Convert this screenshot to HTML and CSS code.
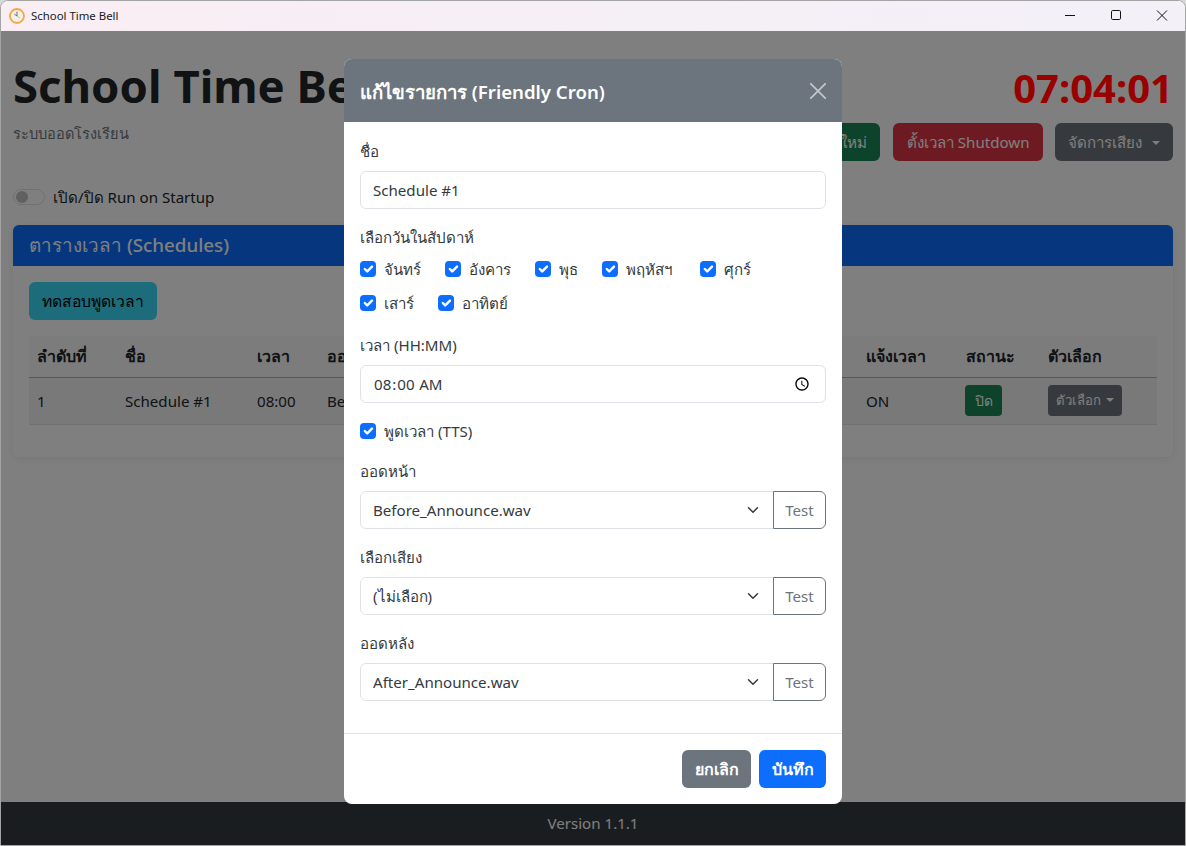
FILE: index.html
```html
<!DOCTYPE html>
<html lang="th">
<head>
<meta charset="utf-8">
<title>School Time Bell</title>
<link rel="stylesheet" href="styles.css">
</head>
<body>
<div class="window">
  <div class="titlebar">
    <svg class="app-icon" viewBox="0 0 16 16" width="16" height="16"><circle cx="8" cy="8" r="7" fill="#f6f1e8" stroke="#efa94a" stroke-width="1.8"/><path d="M8 3.6V8L5.4 6.2" fill="none" stroke="#6f6a70" stroke-width="1"/><path d="M8 8l3 2" stroke="#c9b9a8" stroke-width="1"/></svg>
    <span class="app-name">School Time Bell</span>
    <div class="win-controls">
      <svg viewBox="0 0 46 30" width="46" height="30"><path d="M18 14.5h10" stroke="#111"/></svg>
      <svg viewBox="0 0 46 30" width="46" height="30"><rect x="18.5" y="9.5" width="9" height="9" rx="1.2" fill="none" stroke="#111"/></svg>
      <svg viewBox="0 0 46 30" width="46" height="30"><path d="M18 9.5l10 10M28 9.5l-10 10" stroke="#111"/></svg>
    </div>
  </div>
  <div class="app">
    <main class="container">
      <header class="top">
        <div class="brand">
          <h1 class="brand-title">School Time Bell</h1>
          <p class="brand-sub">ระบบออดโรงเรียน</p>
        </div>
        <div class="top-right">
          <div class="clock">07:04:01</div>
          <div class="actions">
            <button class="btn btn-success">เพิ่มรายการใหม่</button>
            <button class="btn btn-danger">ตั้งเวลา Shutdown</button>
            <button class="btn btn-secondary caret">จัดการเสียง</button>
          </div>
        </div>
      </header>
      <div class="startup">
        <span class="switch"><span class="knob"></span></span>
        <span>เปิด/ปิด Run on Startup</span>
      </div>
      <section class="card">
        <div class="card-head">ตารางเวลา (Schedules)</div>
        <div class="card-body">
          <button class="btn btn-info">ทดสอบพูดเวลา</button>
          <table class="table">
            <colgroup>
              <col class="c-num"><col class="c-name"><col class="c-time"><col class="c-a"><col class="c-b"><col class="c-c"><col class="c-d"><col class="c-tts"><col class="c-st"><col class="c-opt">
            </colgroup>
            <thead>
              <tr><th>ลำดับที่</th><th>ชื่อ</th><th>เวลา</th><th>ออดหน้า</th><th>เสียง</th><th>ออดหลัง</th><th>วัน</th><th>แจ้งเวลา</th><th>สถานะ</th><th>ตัวเลือก</th></tr>
            </thead>
            <tbody>
              <tr><td>1</td><td>Schedule #1</td><td>08:00</td><td>Before_Announce.wav</td><td>-</td><td>After_Announce.wav</td><td>ทุกวัน</td><td>ON</td><td><span class="btn-sm badge btn-success">ปิด</span></td><td><span class="btn-sm btn-secondary caret">ตัวเลือก</span></td></tr>
            </tbody>
          </table>
        </div>
      </section>
    </main>
    <footer class="footer">Version 1.1.1</footer>
    <div class="backdrop">
      <div class="modal">
        <div class="modal-head">
          <span class="modal-title">แก้ไขรายการ (Friendly Cron)</span>
          <svg class="modal-close" viewBox="0 0 16 16" width="16" height="16"><path d="M0 0l16 16M16 0L0 16" stroke="#c4c8cc" stroke-width="1.7"/></svg>
        </div>
        <form class="modal-body">
          <div class="field">
            <label class="label">ชื่อ</label>
            <input class="control" type="text" value="Schedule #1">
          </div>
          <div class="field field-days">
            <label class="label">เลือกวันในสัปดาห์</label>
            <div class="days">
              <label class="check"><input type="checkbox" checked>จันทร์</label>
              <label class="check"><input type="checkbox" checked>อังคาร</label>
              <label class="check"><input type="checkbox" checked>พุธ</label>
              <label class="check check-wide"><input type="checkbox" checked>พฤหัสฯ</label>
              <label class="check"><input type="checkbox" checked>ศุกร์</label>
              <label class="check"><input type="checkbox" checked>เสาร์</label>
              <label class="check"><input type="checkbox" checked>อาทิตย์</label>
            </div>
          </div>
          <div class="field">
            <label class="label">เวลา (HH:MM)</label>
            <input class="control" type="time" value="08:00">
          </div>
          <div class="field">
            <label class="check"><input type="checkbox" checked>พูดเวลา (TTS)</label>
          </div>
          <div class="field">
            <label class="label">ออดหน้า</label>
            <div class="group">
              <select class="control select"><option>Before_Announce.wav</option></select>
              <button type="button" class="btn-test">Test</button>
            </div>
          </div>
          <div class="field">
            <label class="label">เลือกเสียง</label>
            <div class="group">
              <select class="control select"><option>(ไม่เลือก)</option></select>
              <button type="button" class="btn-test">Test</button>
            </div>
          </div>
          <div class="field">
            <label class="label">ออดหลัง</label>
            <div class="group">
              <select class="control select"><option>After_Announce.wav</option></select>
              <button type="button" class="btn-test">Test</button>
            </div>
          </div>
        </form>
        <div class="modal-foot">
          <button class="btn btn-secondary bold">ยกเลิก</button>
          <button class="btn btn-primary bold">บันทึก</button>
        </div>
      </div>
    </div>
  </div>
</div>
</body>
</html>
```
FILE: styles.css
```css
* { box-sizing: border-box; }
html, body { margin: 0; height: 100%; overflow: hidden; }
body {
  font-family: "Noto Sans", "Open Sans", "Liberation Sans", sans-serif;
  font-size: 15.1px;
  line-height: 24px;
  color: #212529;
  background: #d8d8d8;
}
.window {
  height: 846px;
  display: flex;
  flex-direction: column;
  border: 1px solid #a4a4a4;
  border-radius: 8px 8px 0 0;
  overflow: hidden;
  background: #fff;
}
.titlebar {
  height: 30px;
  flex: none;
  display: flex;
  align-items: center;
  padding-left: 8px;
  background: linear-gradient(90deg, #f9eef4, #f3f0f8);
}
.app-icon { margin-right: 6px; }
.app-name { font-size: 11.4px; color: #1a1a1a; }
.win-controls { margin-left: auto; display: flex; }
.app { position: relative; flex: 1; display: flex; flex-direction: column; min-height: 0; }
.container { flex: 1; padding: 25px 12px 0; }
.top { display: flex; justify-content: space-between; align-items: flex-start; }
.brand-title { margin: 0 0 9px; font-size: 45.5px; line-height: 58px; font-weight: 700; }
.brand-sub { margin: 0; font-size: 14.6px; line-height: 21px; color: #6c757d; }
.top-right { display: flex; flex-direction: column; align-items: flex-end; }
.clock { position: relative; z-index: 2; font-size: 40px; line-height: 48px; font-weight: 700; color: #990000; margin-top: 8px; }
.actions { display: flex; gap: 12px; margin-top: 11px; }
.btn { height: 38px; padding: 0 13px; border: 0; border-radius: 6px; font: inherit; color: #fff; white-space: nowrap; }
.btn.bold { font-size: 16px; font-weight: 600; padding: 0 12.5px; }
.btn-success { background: #198754; color: #fff; }
.btn-danger { background: #dc3545; margin-left: 1px; padding: 0 13.5px; }
.btn-secondary { background: #6c757d; color: #fff; }
.btn-primary { background: #0d6efd; }
.btn-info { background: #38d8f8; color: #000; font-size: 15.7px; }
.caret::after {
  content: "";
  display: inline-block;
  margin-left: 5px;
  vertical-align: 3px;
  border-top: 4.8px solid;
  border-left: 4.8px solid transparent;
  border-right: 4.8px solid transparent;
}
.btn.caret::after { margin-left: 10px; }
.startup { display: flex; align-items: center; gap: 8px; margin-top: 24px; height: 24px; }
.switch { width: 32px; height: 16px; border: 1px solid #dee2e6; border-radius: 8px; background: #fff; display: flex; align-items: center; padding-left: 2px; }
.knob { width: 12px; height: 12px; border-radius: 50%; background: #c0c0c0; }
.card { margin-top: 16px; border-radius: 6px; background: #fff; box-shadow: 0 2px 8px rgba(0,0,0,.08); }
.card-head { height: 41px; padding: 0 16px; background: #0d6efd; color: #fff; border-radius: 6px 6px 0 0; font-size: 18.8px; font-weight: 500; line-height: 41px; }
.card-body { padding: 16px; }
.table { width: 100%; margin: 16px 0; border-collapse: collapse; table-layout: fixed; }
.c-num { width: 88px; } .c-name { width: 132px; } .c-time { width: 70px; }
.c-a { width: 170px; } .c-b { width: 110px; } .c-c { width: 160px; }
.c-tts { width: 100px; } .c-st { width: 82px; } .c-opt { width: 117px; }
.table th { height: 41px; padding: 0 8px; text-align: left; font-size: 16px; font-weight: 700; background: #f8f9fa; border-bottom: 1px solid #adb5bd; white-space: nowrap; }
.table td { height: 47px; padding: 0 8px; background: #f2f2f2; border-bottom: 1px solid #dee2e6; white-space: nowrap; }
.btn-sm { display: inline-block; height: 31px; line-height: 31px; padding: 0 8px; border-radius: 4px; font-size: 13.2px; color: #fff; vertical-align: middle; }
.badge { margin-left: -1px; padding: 0 9.5px; font-size: 14px; }
.footer { height: 43px; flex: none; background: #343a40; color: #fff; text-align: center; line-height: 43px; }
.backdrop { position: absolute; inset: 0; display: flex; justify-content: center; align-items: flex-start; padding-top: 28px; background: rgba(0,0,0,.5); }
.modal { width: 498px; background: #fff; border-radius: 8px; display: flex; flex-direction: column; }
.modal-head { height: 63px; flex: none; display: flex; align-items: center; justify-content: space-between; padding: 0 16px; background: #6c757d; color: #fff; border-radius: 8px 8px 0 0; }
.modal-title { font-size: 18.6px; font-weight: 600; position: relative; top: 1px; }
.modal-body { padding: 17px 16px 16px; color: #343a40; }
.field { margin-bottom: 16px; }
.field-days { margin-bottom: 18px; }
.label { display: block; margin-bottom: 8px; }
.control { display: block; width: 100%; height: 38px; padding: 0 12px; border: 1px solid #dee2e6; border-radius: 6px; background: #fff; color: #343a40; font: inherit; }
.select {
  appearance: none;
  background: #fff url("data:image/svg+xml,%3csvg xmlns='http://www.w3.org/2000/svg' viewBox='0 0 16 16'%3e%3cpath fill='none' stroke='%23343a40' stroke-linecap='round' stroke-linejoin='round' stroke-width='2' d='m2 5 6 6 6-6'/%3e%3c/svg%3e") no-repeat right 12px center / 16px 12px;
  border-radius: 6px 0 0 6px;
  flex: 1;
  min-width: 0;
}
.group { display: flex; }
.btn-test { width: 53px; height: 38px; margin-left: -1px; padding: 0; background: #fff; border: 1px solid #6c757d; border-radius: 0 6px 6px 0; color: #6c757d; font: inherit; }
.days { display: flex; flex-wrap: wrap; gap: 10px 24px; padding-right: 40px; }
.check { display: flex; align-items: center; gap: 8px; height: 24px; }
.check-wide { padding-right: 4px; }
.check input {
  appearance: none;
  width: 16px; height: 16px; margin: 0;
  border-radius: 4px;
  background: #0d6efd url("data:image/svg+xml,%3csvg xmlns='http://www.w3.org/2000/svg' viewBox='0 0 20 20'%3e%3cpath fill='none' stroke='%23fff' stroke-linecap='round' stroke-linejoin='round' stroke-width='3' d='m6 10 3 3 6-6'/%3e%3c/svg%3e") center / 100% 100%;
}
.modal-foot { display: flex; justify-content: flex-end; gap: 8px; padding: 16px; border-top: 1px solid #dee2e6; }
```
